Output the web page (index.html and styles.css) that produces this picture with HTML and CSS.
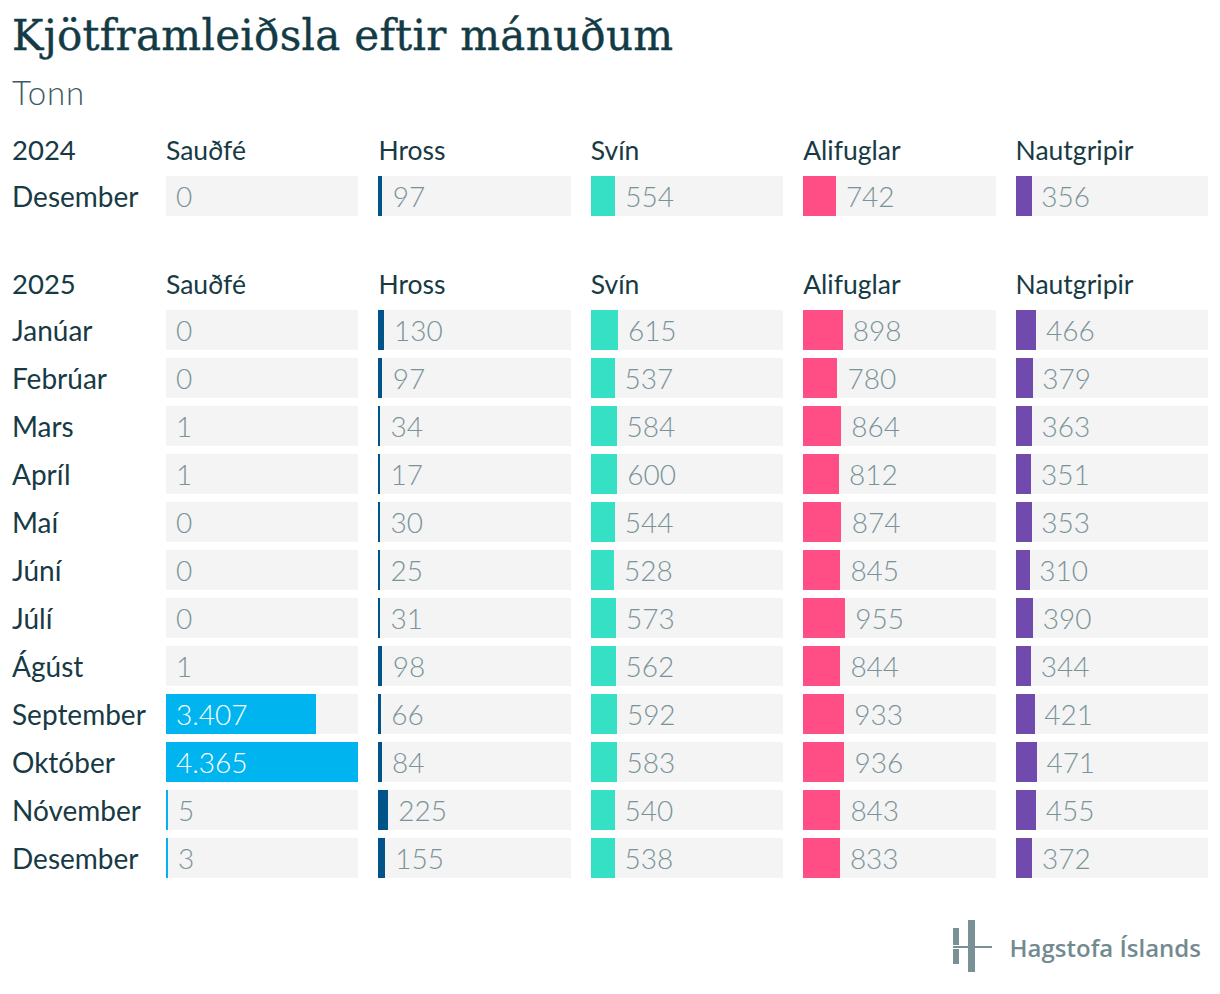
FILE: index.html
```html
<!DOCTYPE html>
<html lang="is">
<head>
<meta charset="utf-8">
<title>Kjötframleiðsla eftir mánuðum</title>
<link rel="stylesheet" href="styles.css">
</head>
<body>
<div class="page">
  <h1 class="title">Kjötframleiðsla eftir mánuðum</h1>
  <div class="subtitle">Tonn</div>

  <div class="table first">
    <div class="head year">2024</div>
    <div class="head">Sauðfé</div>
    <div class="head">Hross</div>
    <div class="head">Svín</div>
    <div class="head">Alifuglar</div>
    <div class="head">Nautgripir</div>

    <div class="label">Desember</div>
    <div class="cell c1" style="--w:0px">0</div>
    <div class="cell c2" style="--w:4.3px">97</div>
    <div class="cell c3" style="--w:24.4px">554</div>
    <div class="cell c4" style="--w:32.7px">742</div>
    <div class="cell c5" style="--w:15.7px">356</div>
  </div>

  <div class="table">
    <div class="head year">2025</div>
    <div class="head">Sauðfé</div>
    <div class="head">Hross</div>
    <div class="head">Svín</div>
    <div class="head">Alifuglar</div>
    <div class="head">Nautgripir</div>

    <div class="label">Janúar</div>
    <div class="cell c1" style="--w:0px">0</div>
    <div class="cell c2" style="--w:5.7px">130</div>
    <div class="cell c3" style="--w:27.1px">615</div>
    <div class="cell c4" style="--w:39.6px">898</div>
    <div class="cell c5" style="--w:20.5px">466</div>

    <div class="label">Febrúar</div>
    <div class="cell c1" style="--w:0px">0</div>
    <div class="cell c2" style="--w:4.3px">97</div>
    <div class="cell c3" style="--w:23.7px">537</div>
    <div class="cell c4" style="--w:34.4px">780</div>
    <div class="cell c5" style="--w:16.7px">379</div>

    <div class="label">Mars</div>
    <div class="cell c1" style="--w:0px">1</div>
    <div class="cell c2" style="--w:2px">34</div>
    <div class="cell c3" style="--w:25.7px">584</div>
    <div class="cell c4" style="--w:38.1px">864</div>
    <div class="cell c5" style="--w:16px">363</div>

    <div class="label">Apríl</div>
    <div class="cell c1" style="--w:0px">1</div>
    <div class="cell c2" style="--w:2px">17</div>
    <div class="cell c3" style="--w:26.5px">600</div>
    <div class="cell c4" style="--w:35.8px">812</div>
    <div class="cell c5" style="--w:15.5px">351</div>

    <div class="label">Maí</div>
    <div class="cell c1" style="--w:0px">0</div>
    <div class="cell c2" style="--w:2px">30</div>
    <div class="cell c3" style="--w:24px">544</div>
    <div class="cell c4" style="--w:38.5px">874</div>
    <div class="cell c5" style="--w:15.6px">353</div>

    <div class="label">Júní</div>
    <div class="cell c1" style="--w:0px">0</div>
    <div class="cell c2" style="--w:2px">25</div>
    <div class="cell c3" style="--w:23.3px">528</div>
    <div class="cell c4" style="--w:37.2px">845</div>
    <div class="cell c5" style="--w:13.7px">310</div>

    <div class="label">Júlí</div>
    <div class="cell c1" style="--w:0px">0</div>
    <div class="cell c2" style="--w:2px">31</div>
    <div class="cell c3" style="--w:25.3px">573</div>
    <div class="cell c4" style="--w:42.1px">955</div>
    <div class="cell c5" style="--w:17.2px">390</div>

    <div class="label">Ágúst</div>
    <div class="cell c1" style="--w:0px">1</div>
    <div class="cell c2" style="--w:4.3px">98</div>
    <div class="cell c3" style="--w:24.8px">562</div>
    <div class="cell c4" style="--w:37.2px">844</div>
    <div class="cell c5" style="--w:15.2px">344</div>

    <div class="label">September</div>
    <div class="cell c1 inside" style="--w:150.2px">3.407</div>
    <div class="cell c2" style="--w:2.9px">66</div>
    <div class="cell c3" style="--w:26.1px">592</div>
    <div class="cell c4" style="--w:41.1px">933</div>
    <div class="cell c5" style="--w:18.6px">421</div>

    <div class="label">Október</div>
    <div class="cell c1 inside" style="--w:192.4px">4.365</div>
    <div class="cell c2" style="--w:3.7px">84</div>
    <div class="cell c3" style="--w:25.7px">583</div>
    <div class="cell c4" style="--w:41.3px">936</div>
    <div class="cell c5" style="--w:20.8px">471</div>

    <div class="label">Nóvember</div>
    <div class="cell c1" style="--w:2px">5</div>
    <div class="cell c2" style="--w:9.9px">225</div>
    <div class="cell c3" style="--w:23.8px">540</div>
    <div class="cell c4" style="--w:37.2px">843</div>
    <div class="cell c5" style="--w:20.1px">455</div>

    <div class="label">Desember</div>
    <div class="cell c1" style="--w:2px">3</div>
    <div class="cell c2" style="--w:6.8px">155</div>
    <div class="cell c3" style="--w:23.7px">538</div>
    <div class="cell c4" style="--w:36.7px">833</div>
    <div class="cell c5" style="--w:16.4px">372</div>
  </div>

  <div class="footer">
    <div class="logo">
      <svg class="logo-mark" width="40" height="54" viewBox="0 0 40 54" aria-hidden="true">
        <rect x="0" y="8" width="6" height="17" fill="#7a9097"/>
        <rect x="0" y="29" width="6" height="15" fill="#7a9097"/>
        <rect x="15" y="0" width="7" height="52" fill="#7a9097"/>
        <rect x="0" y="26" width="39" height="2" fill="#7a9097"/>
      </svg>
      <span class="logo-text">Hagstofa Íslands</span>
    </div>
  </div>
</div>
</body>
</html>
```

FILE: styles.css
```css
* { box-sizing: border-box; }

body {
  margin: 0;
  background: #ffffff;
  font-family: Lato, "Noto Sans", sans-serif;
  color: #173a45;
}

.page {
  width: 1220px;
  padding: 12px 12px 0 12px;
}

.title {
  margin: 0;
  font-family: "DejaVu Serif", serif;
  font-weight: normal;
  font-size: 42px;
  line-height: 48px;
  color: #133b45;
  letter-spacing: 0.3px;
  -webkit-text-stroke: 0.4px #133b45;
}

.subtitle {
  font-family: Lato, sans-serif;
  font-weight: 300;
  font-size: 33px;
  line-height: 40px;
  letter-spacing: 0.8px;
  color: #3d5a64;
  margin-top: 12px;
}

.table {
  display: grid;
  grid-template-columns: 134px repeat(5, 1fr);
  grid-auto-rows: 40px;
  column-gap: 20px;
  row-gap: 8px;
  margin-top: 46px;
}

.table.first {
  margin-top: 16px;
}

.head,
.label {
  display: flex;
  align-items: center;
  font-size: 28px;
  color: #173a45;
  white-space: nowrap;
}

.head {
  align-items: flex-end;
  padding-bottom: 2px;
  font-size: 26.5px;
}

.head.year {
  font-size: 27.5px;
}

.cell {
  display: flex;
  align-items: center;
  padding-left: calc(var(--w) + 10px);
  font-weight: 300;
  font-size: 28px;
  color: #7a9399;
  background: linear-gradient(to right, var(--c) 0, var(--c) var(--w), #f4f4f4 var(--w), #f4f4f4 100%);
  white-space: nowrap;
}

.cell.inside {
  padding-left: 10px;
  color: #ffffff;
}

.c1 { --c: #00b5ef; }
.c2 { --c: #00548a; }
.c3 { --c: #36e0c4; }
.c4 { --c: #ff4d85; }
.c5 { --c: #704aad; }

.footer {
  display: flex;
  justify-content: flex-end;
  margin-top: 42px;
  padding-right: 7px;
}

.logo {
  display: flex;
  align-items: center;
  gap: 17px;
}

.logo-text {
  font-family: "Open Sans", sans-serif;
  font-weight: 600;
  font-size: 24px;
  color: #738a91;
}
```
